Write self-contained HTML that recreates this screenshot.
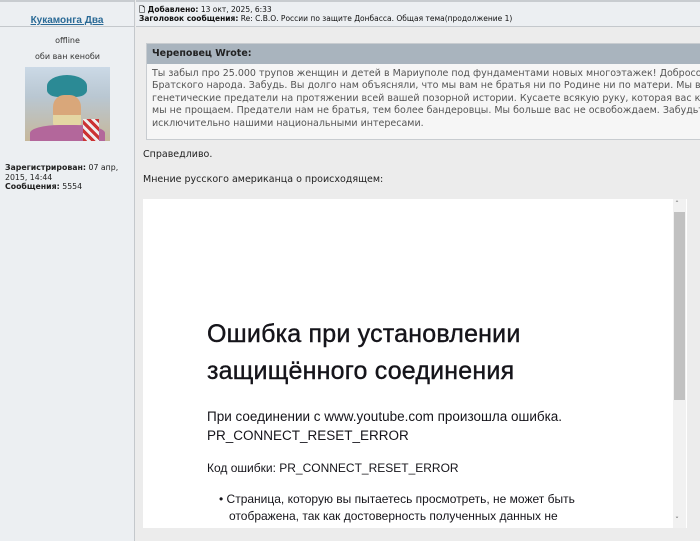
<!DOCTYPE html>
<html><head><meta charset="utf-8"><style>
*{margin:0;padding:0;box-sizing:border-box}
body{width:700px;height:541px;overflow:hidden;background:#ececec;font-family:Verdana,"DejaVu Sans","Liberation Sans",sans-serif;position:relative}
.left{position:absolute;left:0;top:0;width:135px;height:541px;background:#eceff2;border-right:1px solid #c4c8cc}
.lh{height:27px;border-bottom:1px solid #c4c8cc;border-top:2px solid #c8ccd0;text-align:center;padding-top:6px}
.lh a{color:#2a6a96;font-weight:bold;font-size:10px;text-decoration:underline;font-family:"Liberation Sans",sans-serif}
.rh{position:absolute;left:136px;top:0;width:564px;height:27px;border-top:2px solid #c8ccd0;border-bottom:1px solid #c4c8cc;background:#eceff2;font-size:7.5px;padding:3px 0 0 3px;line-height:9px;color:#111}
.c{font-size:8px;color:#333;text-align:center;position:absolute;width:135px}
.av{position:absolute;left:25px;top:67px;width:85px;height:74px;background:linear-gradient(180deg,#cbd9e6 0%,#b9c7d2 40%,#c6b79a 100%);overflow:hidden}
.stat{position:absolute;left:5px;top:163px;font-size:7.8px;line-height:9.5px;color:#222}
.quote{position:absolute;left:146px;top:43px;width:560px;border:1px solid #c8ccd0}
.qh{height:20px;background:#a9b4be;font-weight:bold;font-size:9.5px;padding:4px 5px;color:#222}
.qb{background:#f6f6f6;height:75px;font-size:9.5px;line-height:12.4px;color:#555;padding:4px 5px;white-space:nowrap;overflow:hidden}
.t{position:absolute;left:143px;font-size:9.5px;color:#222}
.fr{position:absolute;left:143px;top:199px;width:544px;height:329px;background:#fff}
.sb{position:absolute;left:673px;top:199px;width:13px;height:329px;background:#f1f1f1}
.th{position:absolute;left:674px;top:212px;width:11px;height:188px;background:#c1c1c1}
.e{font-family:"Liberation Sans",sans-serif;color:#15141a;position:absolute;left:207px;white-space:nowrap}
</style></head><body>
<div class="left"><div class="lh"><a>Кукамонга Два</a></div></div>
<div class="c" style="top:36px">offline</div>
<div class="c" style="top:52px">оби ван кеноби</div>
<div class="av">
<div style="position:absolute;left:22px;top:8px;width:40px;height:22px;border-radius:50% 50% 30% 30%;background:#2b8a95"></div>
<div style="position:absolute;left:28px;top:28px;width:28px;height:30px;border-radius:40%;background:#d9a77a"></div>
<div style="position:absolute;left:28px;top:48px;width:28px;height:16px;border-radius:0 0 50% 50%;background:#e4d6a3"></div>
<div style="position:absolute;left:5px;top:58px;width:75px;height:20px;border-radius:40% 40% 0 0;background:#b3679b"></div>
<div style="position:absolute;left:58px;top:52px;width:16px;height:22px;background:repeating-linear-gradient(45deg,#c33 0 3px,#eee 3px 6px)"></div>
</div>
<div class="stat"><b>Зарегистрирован:</b> 07 апр,<br>2015, 14:44<br><b>Сообщения:</b> 5554</div>
<div class="rh"><b>🗋 Добавлено:</b> 13 окт, 2025, 6:33<br><b>Заголовок сообщения:</b> Re: С.В.О. России по защите Донбасса. Общая тема(продолжение 1)</div>
<div class="quote"><div class="qh">Череповец Wrote:</div>
<div class="qb">Ты забыл про 25.000 трупов женщин и детей в Мариуполе под фундаментами новых многоэтажек! Добросовестные<br>Братского народа. Забудь. Вы долго нам объясняли, что мы вам не братья ни по Родине ни по матери. Мы вам<br>генетические предатели на протяжении всей вашей позорной истории. Кусаете всякую руку, которая вас кормит<br>мы не прощаем. Предатели нам не братья, тем более бандеровцы. Мы больше вас не освобождаем. Забудьте<br>исключительно нашими национальными интересами.</div></div>
<div class="t" style="top:149px">Справедливо.</div>
<div class="t" style="top:174px">Мнение русского американца о происходящем:</div>
<div class="fr"></div><div class="sb"></div><div class="th"></div>
<div style="position:absolute;left:675px;top:200px;font-size:8px;color:#666">&#710;</div>
<div style="position:absolute;left:675px;top:516px;font-size:8px;color:#666">&#711;</div>
<div class="e" style="top:316px;font-size:25px;line-height:37px;letter-spacing:0.2px;-webkit-text-stroke:0.4px #15141a">Ошибка при установлении<br>защищённого соединения</div>
<div class="e" style="top:407px;font-size:13.5px;line-height:19px">При соединении с www.youtube.com произошла ошибка.<br>PR_CONNECT_RESET_ERROR</div>
<div class="e" style="top:461px;font-size:12px">Код ошибки: PR_CONNECT_RESET_ERROR</div>
<div class="e" style="top:491px;left:219px;font-size:12px;line-height:17px">• Страница, которую вы пытаетесь просмотреть, не может быть<br>&nbsp;&nbsp;&nbsp;отображена, так как достоверность полученных данных не</div>
</body></html>
